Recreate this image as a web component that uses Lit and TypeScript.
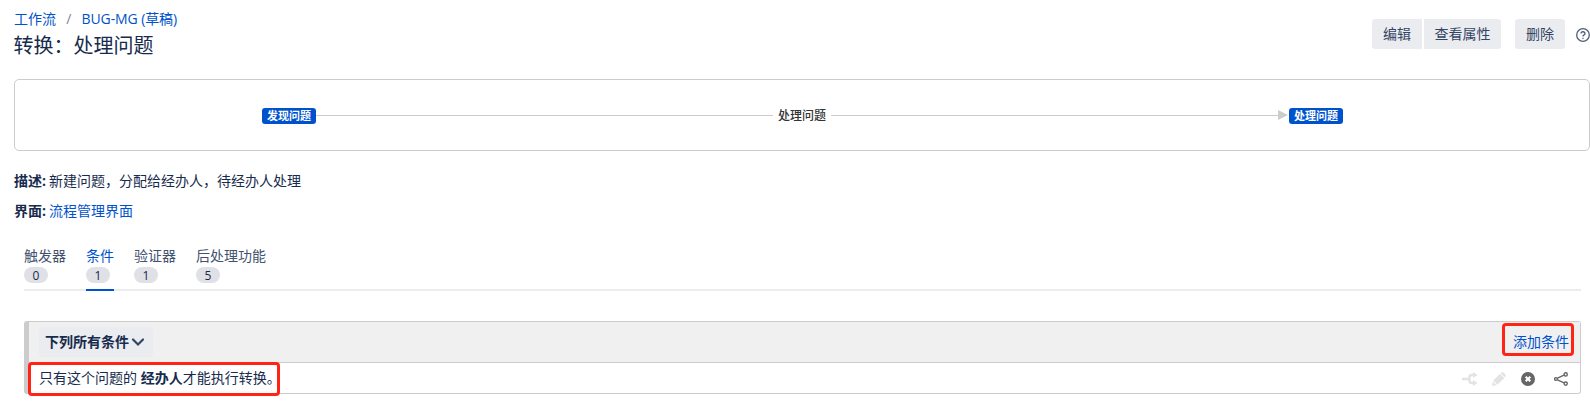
import { LitElement, html, css } from "lit";
import { customElement } from "lit/decorators.js";

const tabs = [
  { label: "触发器", count: 0, active: false },
  { label: "条件", count: 1, active: true },
  { label: "验证器", count: 1, active: false },
  { label: "后处理功能", count: 5, active: false },
];

@customElement("app-root")
export class AppRoot extends LitElement {
  static styles = css`
    :host {
      display: block;
      height: 415px;
      overflow: hidden;
      background: #fff;
      color: #172b4d;
      font: 14px/20px "Open Sans", "Noto Sans CJK SC", sans-serif;
    }
    * { box-sizing: border-box; }
    a { color: #0052cc; text-decoration: none; }
    svg { display: block; flex: none; }
    .page { padding: 9px 0 0 14px; }
    .header { display: flex; justify-content: space-between; height: 70px; }
    .crumbs { display: flex; white-space: pre; }
    .crumbs span { color: #7a869a; width: 25.5px; text-align: center; }
    .latin { letter-spacing: -0.1px; }
    h1 { margin: 5px 0 0 -0.5px; font-size: 20px; line-height: 24px; font-weight: 400; }
    .actions { display: flex; padding-top: 10px; }
    .btn {
      height: 30px; padding: 0 11px; line-height: 30px; background: #ebecf0;
      color: #344563; border-radius: 3px; white-space: nowrap;
    }
    .btn.first { border-radius: 3px 0 0 3px; margin-right: 2px; }
    .btn.last { border-radius: 0 3px 3px 0; margin-right: 14px; width: 77px; padding: 0 10.5px; }
    .help { margin: 9px 0 0 11px; }
    .diagram {
      height: 72px; border: 1px solid #ccc; border-radius: 5px; display: flex;
      align-items: center; padding: 2px 246px 0 247px; font-size: 12px;
    }
    .state {
      width: 54px; height: 16px; border-radius: 3px; background: #0052cc; color: #fff;
      font-size: 11px; line-height: 16px; font-weight: 700; text-align: center; flex: none;
    }
    .line { flex: 1; height: 1px; background: #ccc; margin-top: -2px; }
    .line.from { flex: 0 0 457px; }
    .name { width: 58px; text-align: center; color: #333; font-weight: 500; }
    .head { width: 0; border: 5px solid transparent; border-left: 10px solid #ccc; border-right: 0; margin: -2px 1px 0 0; }
    .field { margin-top: 10px; }
    .field.top { margin-top: 20px; }
    .field b { margin-right: 3px; }
    .tabs { margin: 25px 9px 0 10px; height: 45px; display: flex; gap: 20px; border-bottom: 2px solid #ebecf0; }
    .tab { height: 45px; color: #42526e; line-height: 20px; }
    .tab.active { color: #0052cc; border-bottom: 2px solid #0052cc; }
    .badge {
      width: 24px; height: 16px; margin-top: 1px; border-radius: 8px; background: #dfe1e6; color: #172b4d;
      font-size: 12px; line-height: 17px; text-align: center;
    }
    .group {
      position: relative; margin: 30px 9px 0 10px; height: 73px; border: 1px solid #ccc;
      border-left-width: 5px; border-radius: 3px;
    }
    .bar { height: 41px; background: #f0f0f0; border-bottom: 1px solid #ccc; display: flex; align-items: center; justify-content: space-between; padding: 0 11px 0 10px; }
    .mode { display: flex; align-items: center; height: 30px; width: 114px; padding-left: 6px; background: #ebecf0; border-radius: 3px; font-weight: 700; }
    .row { height: 30px; display: flex; align-items: center; justify-content: space-between; padding: 0 12px 0 10px; }
    .tools { display: flex; align-items: center; padding-top: 1px; }
    .edit { margin-left: 14px; }
    .remove { margin-left: 15px; }
    .share { margin-left: 19px; }
    .mark { position: absolute; border: 3px solid #ff2413; border-radius: 4px; }
    .mark.text { left: -1px; top: 40px; width: 252px; height: 34px; }
    .mark.add { right: 6px; top: 1px; width: 72px; height: 33px; }
  `;

  render() {
    return html`
      <main class="page">
        <header class="header">
          <div>
            <nav class="crumbs"><a>工作流</a><span>/</span><a class="latin">BUG-MG (草稿)</a></nav>
            <h1>转换：处理问题</h1>
          </div>
          <div class="actions">
            <div class="btn first">编辑</div>
            <div class="btn last">查看属性</div>
            <div class="btn">删除</div>
            <svg class="help" width="14" height="14" viewBox="0 0 14 14" fill="none" stroke="#505f79">
              <circle cx="7" cy="7" r="6.3" stroke-width="1.3" />
              <path d="M5 5.600a2 1.800 0 1 1 2.800 1.600q-.8.4-.8 1.200" stroke-width="1.400" />
              <circle cx="7" cy="10.300" r=".4" stroke-width=".8" />
            </svg>
          </div>
        </header>
        <section class="diagram">
          <div class="state">发现问题</div>
          <div class="line from"></div>
          <div class="name">处理问题</div>
          <div class="line"></div>
          <div class="head"></div>
          <div class="state">处理问题</div>
        </section>
        <div class="field top"><b>描述:</b>新建问题，分配给经办人，待经办人处理</div>
        <div class="field"><b>界面:</b><a>流程管理界面</a></div>
        <nav class="tabs">
          ${tabs.map((t) => html`<div class="tab ${t.active ? "active" : ""}">${t.label}<div class="badge">${t.count}</div></div>`)}
        </nav>
        <section class="group">
          <div class="bar">
            <div class="mode">下列所有条件
              <svg width="16" height="16" viewBox="0 0 16 16" fill="none" stroke="#344563" stroke-width="2.200" stroke-linecap="round"><path d="M4 5.500l5 5 5-5" /></svg>
            </div>
            <a>添加条件</a>
          </div>
          <div class="row">
            <div>只有这个问题的 <b>经办人</b>才能执行转换。</div>
            <div class="tools">
              <svg width="16" height="14" viewBox="0 0 16 14" fill="none" stroke="#e3e3e3" stroke-width="2.400"><path d="M0 7h7M12 3H9.500q-2 0-2 2v4q0 2 2 2H12" /><path d="M11 0v6L15.500 3zM11 8v6l4.500-3z" fill="#e3e3e3" stroke="none" /></svg>
              <svg class="edit" width="14" height="14" viewBox="0 0 14 14" fill="#e3e3e3"><path d="M0 14l.8-4.600 3.800 3.800zM1.200 8.500L8 1.700l4.300 4.300-6.800 6.800zM8.700 1.300l.7-.7q1.100-1.100 2.200 0l1.800 1.800q1.100 1.100 0 2.200l-.7.7z" /></svg>
              <svg class="remove" width="14" height="14" viewBox="0 0 14 14"><circle cx="7" cy="7" r="7" fill="#666" /><path d="M4.700 4.700l4.600 4.600M9.300 4.700l-4.600 4.600" stroke="#fff" stroke-width="2.200" /></svg>
              <svg class="share" width="14" height="14" viewBox="0 0 14 14" fill="none" stroke="#666" stroke-width="1.400"><path d="M3.500 6.200l6.500-3M3.500 7.800l6.500 3" /><circle cx="2" cy="7" r="1.400" /><circle cx="11.700" cy="2.400" r="1.600" /><circle cx="11.700" cy="11.600" r="1.600" /></svg>
            </div>
          </div>
          <div class="mark text"></div>
          <div class="mark add"></div>
        </section>
      </main>
    `;
  }
}
